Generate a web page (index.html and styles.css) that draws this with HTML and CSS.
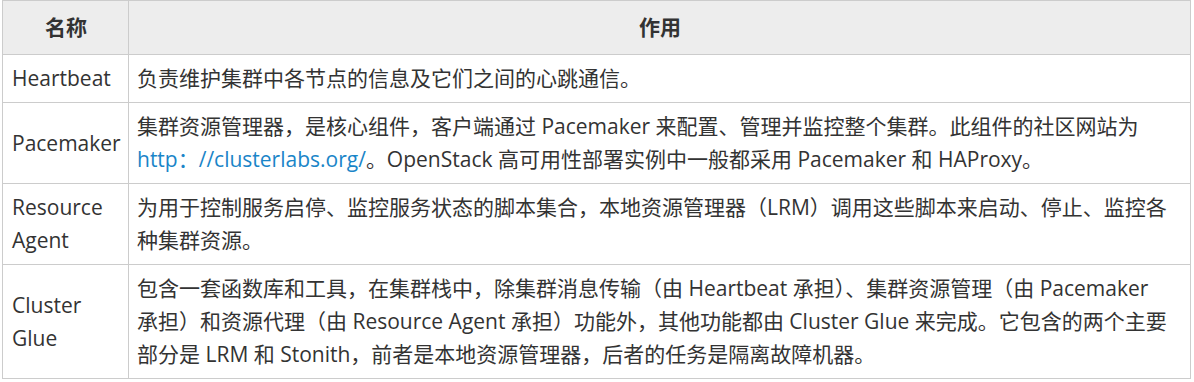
FILE: index.html
```html
<!DOCTYPE html>
<html lang="zh-CN">
<head>
<meta charset="utf-8">
<title>Pacemaker 组件</title>
<link rel="stylesheet" href="styles.css">
</head>
<body>
<table class="grid">
  <thead>
    <tr>
      <th class="col-name">名称</th>
      <th class="col-use">作用</th>
    </tr>
  </thead>
  <tbody>
    <tr>
      <td>Heartbeat</td>
      <td>负责维护集群中各节点的信息及它们之间的心跳通信。</td>
    </tr>
    <tr>
      <td>Pacemaker</td>
      <td>集群资源管理器，是核心组件，客户端通过 Pacemaker 来配置、管理并监控整个集群。此组件的社区网站为 <a class="link" href="#">http：//clusterlabs.org/</a>。OpenStack 高可用性部署实例中一般都采用 Pacemaker 和 HAProxy。</td>
    </tr>
    <tr>
      <td>Resource Agent</td>
      <td>为用于控制服务启停、监控服务状态的脚本集合，本地资源管理器（LRM）调用这些脚本来启动、停止、监控各种集群资源。</td>
    </tr>
    <tr>
      <td>Cluster Glue</td>
      <td>包含一套函数库和工具，在集群栈中，除集群消息传输（由 Heartbeat 承担）、集群资源管理（由 Pacemaker <span class="keep">承担）和</span>资源代理（由 Resource Agent 承担）功能外，其他功能都由 Cluster Glue 来完成。它包含的两个主要部分是 LRM 和 Stonith，前者是本地资源管理器，后者的任务是隔离故障机器。</td>
    </tr>
  </tbody>
</table>
</body>
</html>
```

FILE: styles.css
```css
html, body {
  margin: 0;
  padding: 0;
  background: #ffffff;
}

body {
  padding: 0 2px;
  font-family: "Open Sans", "Noto Sans CJK SC", sans-serif;
  font-size: 21px;
  line-height: 33px;
  color: #333333;
}

.grid {
  width: 1189px;
  border-collapse: collapse;
  border: 1px solid #cccccc;
  table-layout: fixed;
}

.grid th,
.grid td {
  border: 1px solid #cccccc;
  padding: 7px 8px 7px 9px;
  text-align: left;
  vertical-align: middle;
}

.grid td + td {
  padding-left: 8px;
}

.grid th {
  background: #ededed;
  font-weight: bold;
  text-align: center;
  padding-top: 10px;
  padding-bottom: 10px;
}

.col-name {
  width: 126px;
  box-sizing: border-box;
}

.keep {
  white-space: nowrap;
}

.link {
  color: #1a85c8;
  text-decoration: none;
}
```
